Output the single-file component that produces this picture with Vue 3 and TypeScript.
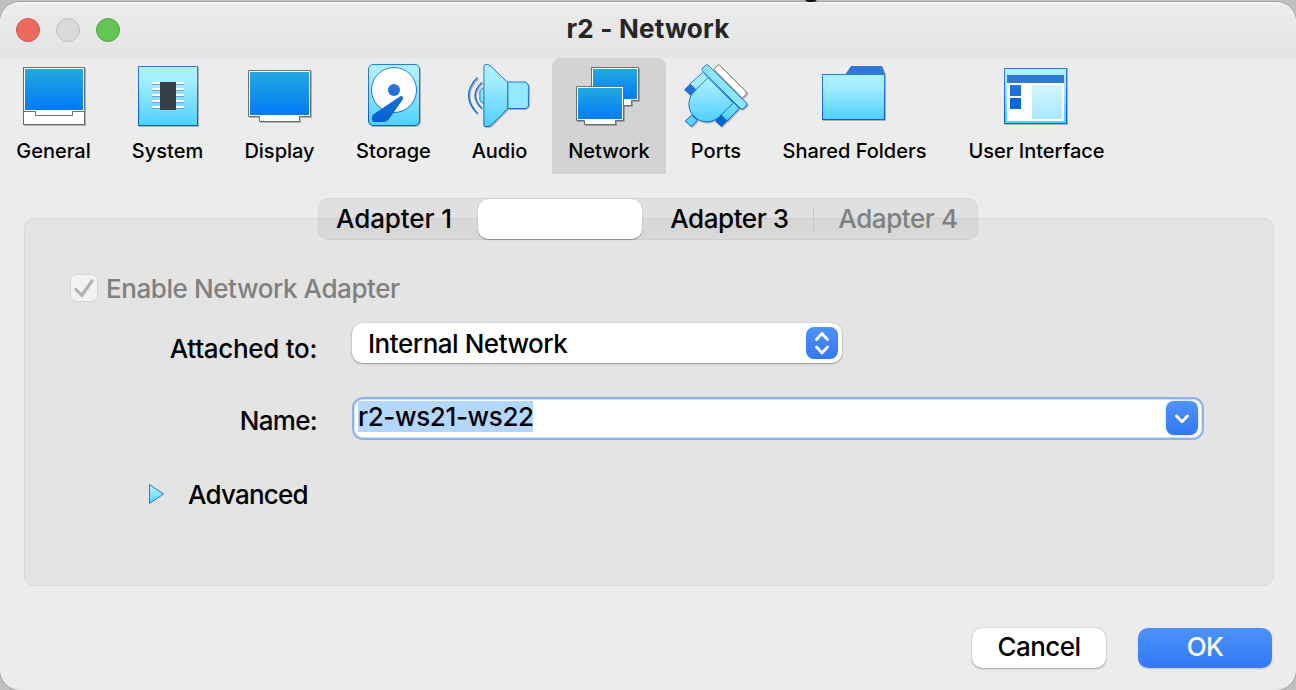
<script setup lang="ts">
import { ref } from 'vue'

interface Section {
  id: string
  label: string
}

const sections: Section[] = [
  { id: 'general', label: 'General' },
  { id: 'system', label: 'System' },
  { id: 'display', label: 'Display' },
  { id: 'storage', label: 'Storage' },
  { id: 'audio', label: 'Audio' },
  { id: 'network', label: 'Network' },
  { id: 'ports', label: 'Ports' },
  { id: 'folders', label: 'Shared Folders' },
  { id: 'interface', label: 'User Interface' },
]

const active = ref('network')
const networkName = ref('r2-ws21-ws22')
</script>

<template>
  <div class="desktop">
    <i class="backdrop-mark"></i>
    <div class="window">
      <header class="titlebar">
        <div class="lights">
          <i class="light close"></i>
          <i class="light minimize"></i>
          <i class="light zoom"></i>
        </div>
        <h1>r2 - Network</h1>
      </header>

      <svg class="defs" width="0" height="0" aria-hidden="true">
        <defs>
          <linearGradient id="screen" x1="0" y1="0" x2="0" y2="1">
            <stop offset="0" stop-color="#22a9e0" />
            <stop offset="1" stop-color="#007bf8" />
          </linearGradient>
          <linearGradient id="sky" x1="0" y1="0" x2="0" y2="1">
            <stop offset="0" stop-color="#adf2ff" />
            <stop offset="0.25" stop-color="#a5edff" />
            <stop offset="1" stop-color="#4fd0ff" />
          </linearGradient>
          <linearGradient id="deep" gradientUnits="userSpaceOnUse" x1="0" y1="0" x2="0" y2="64">
            <stop offset="0.2" stop-color="#3079d8" />
            <stop offset="0.9" stop-color="#0062d2" />
          </linearGradient>
          <linearGradient id="pale" x1="0" y1="0" x2="0" y2="1">
            <stop offset="0" stop-color="#d4f6ff" />
            <stop offset="1" stop-color="#a8e7ff" />
          </linearGradient>
        </defs>
      </svg>

      <nav class="toolbar">
        <button
          v-for="s in sections"
          :key="s.id"
          type="button"
          class="tool"
          :class="[s.id, { active: active === s.id }]"
          @click="active = s.id"
        >
          <svg class="tool-icon" width="64" height="64" viewBox="0 0 64 64">
            <g v-if="s.id === 'general'">
              <rect x="1.5" y="3.5" width="61" height="57" fill="#fff" stroke="#6e6e6e" />
              <rect x="3" y="5" width="58" height="41" fill="url(#screen)" />
              <path d="M1.5 47.5H13.5V51.5H50.5V47.5H62.5" fill="none" stroke="#6e6e6e" />
            </g>
            <g v-else-if="s.id === 'system'">
              <rect x="2.5" y="2.5" width="59" height="59" fill="url(#sky)" stroke="url(#deep)" />
              <path d="M16 20.500H48M16 26.500H48M16 32.500H48M16 38.500H48M16 44.500H48" stroke="#62a6d8" />
              <path d="M16 19H48M16 25H48M16 31H48M16 37H48M16 43H48" stroke="#fff" stroke-width="2" />
              <rect x="24" y="18" width="16" height="28" fill="#383e48" />
            </g>
            <g v-else-if="s.id === 'display'">
              <path d="M.5 6.500H62.5V52.500H51.5V57.500H11.5V52.500H.5Z" fill="#fff" stroke="#6e6e6e" />
              <rect x="2" y="8" width="59" height="43" fill="url(#screen)" />
            </g>
            <g v-else-if="s.id === 'storage'">
              <rect x="6.5" y=".5" width="51" height="61" rx="4.5" fill="url(#sky)" stroke="url(#deep)" />
              <circle cx="32" cy="26" r="22.5" fill="#fff" stroke="url(#deep)" />
              <circle cx="32" cy="26" r="6" fill="url(#deep)" />
              <path d="M38.2 32.2Q40.5 31.4 41.1 33.6Q41.2 34.6 40.4 36L27 55Q25 58 22 58H12.500Q10 58 10 55.500V53Q10 51.500 12 50Z" fill="url(#deep)" />
            </g>
            <g v-else-if="s.id === 'audio'" transform="translate(-.6 0)">
              <path d="M16.500 24H15L12.500 27V36L15 39H16.500" fill="#8be4ff" stroke="url(#deep)" />
              <path d="M18 .5H20Q21.500 .5 23 2L40.500 18.500V44.500L24 61Q22.500 62.500 20.500 62.500H18Q16.500 62.500 16.500 61V2Q16.500 .5 18 .5Z" fill="url(#sky)" stroke="url(#deep)" />
              <path d="M40.500 18H58.500L61 21V42L58.500 44.500H40.500Z" fill="#94e8ff" stroke="url(#deep)" />
              <path d="M14.500 18.500Q1 31.500 14.500 44.500M10 13.500Q-7.500 31.500 10 49.500" fill="none" stroke="url(#deep)" stroke-width="1.500" />
            </g>
            <g v-else-if="s.id === 'network'">
              <path d="M14.500 3.500H61.500V36.500H54.500V41.500H22V36.500H14.500Z" fill="#fff" stroke="#6e6e6e" />
              <rect x="16" y="5" width="44" height="30" fill="url(#screen)" />
              <path d="M-.5 22.500H46.500V56.500H38.500V60.500H7.500V56.500H-.5Z" fill="#fff" stroke="#6e6e6e" />
              <rect x="1" y="24" width="44" height="31" fill="url(#screen)" />
            </g>
            <g v-else-if="s.id === 'ports'">
              <path d="M35.300 1L62.500 28L62.500 30L58.300 34L30 5.500L34 1Z" fill="#fff" stroke="#777" />
              <path d="M19.700 7.700L6 19.700L12 25.700C3 33 3 46 10 52C17 60 29 60 37 51L43.300 57L55.300 44.300Z" fill="url(#sky)" stroke="url(#deep)" />
              <path d="M12 25.700L24 13.700L49.300 39L37 51M20 9L24 13.700" fill="none" stroke="url(#deep)" />
              <path d="M22 1L24 1L63 39.500L63 41L59 45L57 45L18 6.500L18 4.500Z" fill="#8ce4ff" stroke="url(#deep)" />
              <path d="M6 19.700L12 25.700L6.700 31.700L0 25.700ZM37 51L43.300 57L37.300 63L31 57Z" fill="url(#deep)" />
              <path d="M7.700 51L13.300 56.300L7.300 62.700L1.300 57Z" fill="#5cd4ff" stroke="url(#deep)" />
            </g>
            <g v-else-if="s.id === 'folders'">
              <path d="M23.300 10.500L29 2H60L63 10.500Z" fill="#3079d8" />
              <rect x=".5" y="10.500" width="62" height="45" fill="url(#sky)" stroke="url(#deep)" />
            </g>
            <g v-else>
              <rect x=".5" y="4.500" width="62" height="55" fill="url(#sky)" stroke="url(#deep)" />
              <rect x="3" y="11" width="57" height="46" fill="#fff" />
              <rect x="3" y="11" width="57" height="8" fill="#3079d8" />
              <rect x="6" y="21" width="11" height="11" fill="url(#deep)" />
              <rect x="6" y="34" width="11" height="11" fill="#0968d4" />
              <rect x="28" y="21" width="30" height="34" fill="url(#pale)" />
            </g>
          </svg>
          <span>{{ s.label }}</span>
        </button>
      </nav>

      <div class="tabs">
        <div class="tab first">Adapter 1</div>
        <div class="tab selected"></div>
        <div class="tab third">Adapter 3</div>
        <i class="divider"></i>
        <div class="tab fourth">Adapter 4</div>
      </div>

      <section class="panel">
        <div class="enable">
          <span class="checkbox">
            <svg width="28" height="28" viewBox="0 0 28 28">
              <path d="M6 15.500L11.700 21.500L22 7" fill="none" stroke="#b3b3b3" stroke-width="3.200" stroke-linecap="round" stroke-linejoin="round" />
            </svg>
          </span>
          <span class="enable-label">Enable Network Adapter</span>
        </div>

        <div class="row attached">
          <label>Attached to:</label>
          <div class="select">
            <span class="select-value">Internal Network</span>
            <span class="stepper">
              <svg width="32" height="32" viewBox="0 0 32 32">
                <path d="M10.500 12.500L16 6.500L21.500 12.500M10.500 20L16 26L21.500 20" />
              </svg>
            </span>
          </div>
        </div>

        <div class="row name">
          <label>Name:</label>
          <div class="combo">
            <span class="selection">{{ networkName }}</span>
            <span class="drop">
              <svg width="32" height="34" viewBox="0 0 32 34">
                <path d="M10.500 15L16 20.800L21.500 15" />
              </svg>
            </span>
          </div>
        </div>

        <div class="advanced">
          <svg width="18" height="22" viewBox="0 0 18 22">
            <path d="M1.500 1.500L15.500 11L1.500 20.500Z" fill="url(#sky)" stroke="#2477dc" stroke-linejoin="round" />
          </svg>
          <span>Advanced</span>
        </div>
      </section>

      <footer class="actions">
        <button type="button" class="btn cancel">Cancel</button>
        <button type="button" class="btn ok">OK</button>
      </footer>
    </div>
  </div>
</template>

<style>
body {
  margin: 0;
  overflow: hidden;
  background: #c2c2c2;
}
</style>

<style scoped>
* {
  box-sizing: border-box;
}
.desktop {
  position: relative;
  width: 1296px;
  height: 690px;
  padding-top: 2px;
  overflow: hidden;
  background: #c0c0c0;
  font-family: Inter, 'Liberation Sans', sans-serif;
  font-size: 26px;
  font-weight: 450;
  letter-spacing: -0.42px;
  color: #000;
}
.backdrop-mark {
  position: absolute;
  z-index: 2;
  left: 805px;
  top: -6px;
  width: 12px;
  height: 8px;
  border-radius: 4px;
  background: #111;
}
.window {
  position: relative;
  display: flex;
  flex-direction: column;
  width: 1296px;
  height: 688px;
  border-radius: 20px;
  overflow: hidden;
  background: #ececec;
  box-shadow: 0 0 0 1px #a0a0a0;
}
.titlebar {
  position: relative;
  display: flex;
  align-items: center;
  justify-content: center;
  flex: none;
  height: 56px;
  padding-bottom: 2px;
  background: linear-gradient(#ececec, #e4e4e4);
  box-shadow: inset 0 1px #f8f8f8;
}
h1 {
  margin: 0;
  font-size: 26px;
  line-height: 32px;
  font-weight: 700;
  letter-spacing: 0.2px;
  color: #262626;
  white-space: nowrap;
}
.lights {
  position: absolute;
  left: 16px;
  top: 16px;
  display: flex;
  gap: 16px;
}
.light {
  width: 24px;
  height: 24px;
  border-radius: 50%;
  border: 1px solid;
}
.close {
  background: #ed6a5e;
  border-color: #d65549;
}
.minimize {
  background: #d9d9d9;
  border-color: #bfbfbf;
}
.zoom {
  background: #62c554;
  border-color: #52a842;
}
.defs {
  position: absolute;
}
.toolbar {
  display: flex;
  flex: none;
  height: 116px;
}
.tool {
  display: flex;
  flex-direction: column;
  align-items: center;
  padding: 6px 0 0;
  border: 0;
  background: none;
  font: 500 20px/28px Inter, sans-serif;
  letter-spacing: 0;
  color: #000;
  white-space: nowrap;
}
.tool span {
  margin-top: 9px;
}
.tool-icon {
  flex: none;
  overflow: visible;
  filter: drop-shadow(1px 1px 0 rgba(0, 0, 0, 0.25));
}
.general { width: 108px; }
.system { width: 120px; }
.display { width: 104px; }
.storage { width: 124px; }
.audio { width: 88px; }
.network { width: 114px; margin: 0 8px; }
.ports { width: 84px; }
.folders { width: 192px; }
.interface { width: 172px; }
.general span,
.system span,
.display span,
.storage span,
.audio span {
  padding-right: 1px;
}
.folders span,
.interface span {
  padding-left: 1px;
}
.tool.active {
  background: #d3d3d3;
  border-radius: 8px 8px 0 0;
}
.tabs {
  position: relative;
  z-index: 1;
  display: flex;
  align-items: center;
  flex: none;
  width: 660px;
  height: 42px;
  margin: 24px 0 0 318px;
  border-radius: 10px;
  background: rgba(0, 0, 0, 0.05);
  box-shadow: inset 0 0 0 1px rgba(0, 0, 0, 0.04);
  line-height: 42px;
}
.tab {
  white-space: nowrap;
  text-align: center;
}
.first {
  width: 159px;
  padding-right: 7px;
  letter-spacing: -0.1px;
}
.selected {
  width: 164px;
  height: 40px;
  margin-left: 1px;
  border-radius: 10px;
  background: #fff;
  box-shadow: 0 0 1px rgba(0, 0, 0, 0.3), 0 1px 1px rgba(0, 0, 0, 0.3);
}
.third { width: 171px; padding-left: 4px; }
.divider {
  width: 1px;
  height: 24px;
  background: #c6c6c6;
}
.fourth { width: 164px; padding-left: 4px; color: #808080; }
.panel {
  flex: none;
  display: flex;
  flex-direction: column;
  width: 1250px;
  height: 368px;
  margin: -22px 0 0 24px;
  border: 1px solid #d9d9d9;
  border-radius: 10px;
  background: #e4e4e4;
}
.enable {
  display: flex;
  align-items: center;
  height: 32px;
  margin: 53px 0 0 45px;
  color: #808080;
}
.checkbox {
  width: 28px;
  height: 28px;
  border-radius: 6px;
  background: #f2f2f2;
  box-shadow: inset 0 0 0 1px #d5d5d5;
}
.checkbox svg { display: block; }
.enable-label {
  margin-left: 8px;
  white-space: nowrap;
}
.row {
  display: flex;
}
.row label {
  width: 293px;
  padding-right: 1px;
  text-align: right;
  line-height: 32px;
  white-space: nowrap;
}
.attached { margin-top: 19px; }
.attached label {
  padding-top: 10px;
  letter-spacing: -0.3px;
}
.name { margin-top: 32px; }
.name label {
  padding-top: 8px;
  letter-spacing: -0.7px;
}
.select {
  display: flex;
  align-items: center;
  justify-content: space-between;
  width: 490px;
  height: 40px;
  margin-left: 34px;
  padding: 0 4px 0 16px;
  border-radius: 10px;
  background: #fff;
  box-shadow: 0 0 1px rgba(0, 0, 0, 0.35), 0 1px 2px rgba(0, 0, 0, 0.3);
  white-space: nowrap;
}
.select-value { letter-spacing: -0.47px; }
.stepper,
.drop {
  border-radius: 8px;
  background: linear-gradient(#4d93f8, #3478f6);
}
.stepper { width: 32px; height: 32px; }
.stepper svg,
.drop svg {
  display: block;
  fill: none;
  stroke: #fff;
  stroke-width: 2.8px;
  stroke-linecap: round;
  stroke-linejoin: round;
}
.combo {
  display: flex;
  align-items: flex-start;
  justify-content: space-between;
  width: 852px;
  height: 43px;
  margin-left: 34px;
  padding: 2px 4px 0;
  border: 2px solid #8fb2e8;
  border-radius: 11px;
  background: #fff;
  box-shadow: inset 0 0 0 1px #cfe0fb;
}
.selection {
  width: 175px;
  height: 31px;
  background: #b3d7ff;
  letter-spacing: -0.36px;
  line-height: 31px;
  white-space: nowrap;
}
.drop {
  width: 32px;
  height: 34px;
  box-shadow: 0 0 2px #8db7f8;
}
.advanced {
  display: flex;
  align-items: center;
  height: 32px;
  margin: 38px 0 0 123px;
  letter-spacing: -0.78px;
  white-space: nowrap;
}
.advanced span { margin-left: 22px; }
.actions {
  display: flex;
  gap: 32px;
  margin: 42px 0 0 972px;
}
.btn {
  width: 134px;
  height: 40px;
  padding: 0 0 2px;
  border: 0;
  border-radius: 10px;
  font: 450 26px/38px Inter, sans-serif;
  letter-spacing: -0.55px;
  white-space: nowrap;
}
.cancel {
  background: #fff;
  color: #000;
  box-shadow: 0 0 1px rgba(0, 0, 0, 0.4), 0 1px 2px rgba(0, 0, 0, 0.28);
}
.ok {
  background: linear-gradient(#4d92f8, #3478f6);
  color: #fff;
  box-shadow: 0 1px 2px rgba(52, 120, 246, 0.3);
}
</style>
